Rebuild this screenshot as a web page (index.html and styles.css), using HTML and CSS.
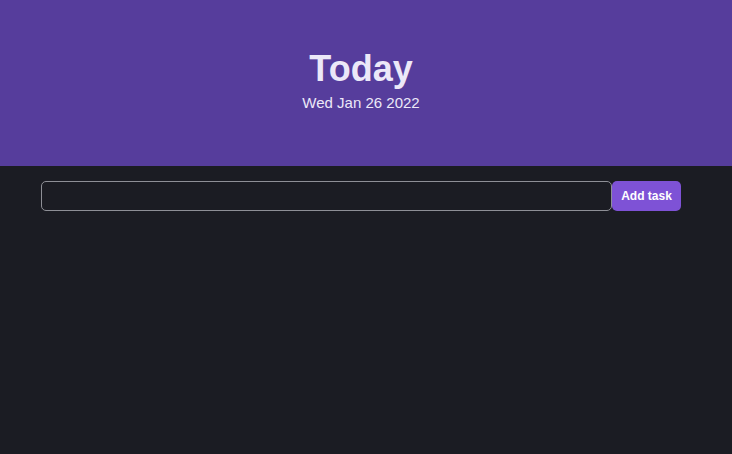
FILE: index.html
```html
<!DOCTYPE html>
<html>
<head>
<meta charset="utf-8">
<link rel="stylesheet" href="styles.css">
</head>
<body>
<header class="hero">
  <h1 class="title">Today</h1>
  <div class="date">Wed Jan 26 2022</div>
</header>
<main class="main">
  <form class="task-form">
    <input class="task-input" type="text">
    <button class="add-btn" type="button">Add task</button>
  </form>
</main>
</body>
</html>
```
FILE: styles.css
```css
html, body {
  margin: 0;
  padding: 0;
  height: 100%;
}
body {
  background: #1b1c23;
  font-family: "Liberation Sans", Arial, sans-serif;
}
.hero {
  background: #563d9c;
  height: 166px;
  box-sizing: border-box;
  padding: 47px 10px 0 0;
  text-align: center;
  color: #ece8f8;
}
.title {
  margin: 0;
  font-size: 36px;
  line-height: 44px;
  font-weight: bold;
}
.date {
  margin-top: 2px;
  font-size: 15px;
  line-height: 20px;
}
.main {
  padding: 15px 0 0 41px;
}
.task-form {
  display: flex;
  margin: 0;
}
.task-input {
  width: 571px;
  height: 30px;
  box-sizing: border-box;
  background: #1b1c23;
  border: 1px solid #8e8f96;
  border-radius: 5px;
  color: #eee;
  margin: 0;
  padding: 0 8px;
}
.add-btn {
  width: 69px;
  height: 30px;
  border: none;
  border-radius: 5px;
  background: #7e52d6;
  color: #ffffff;
  font-family: "Liberation Sans", Arial, sans-serif;
  font-weight: bold;
  font-size: 12px;
  padding: 0;
  margin: 0;
}
```
